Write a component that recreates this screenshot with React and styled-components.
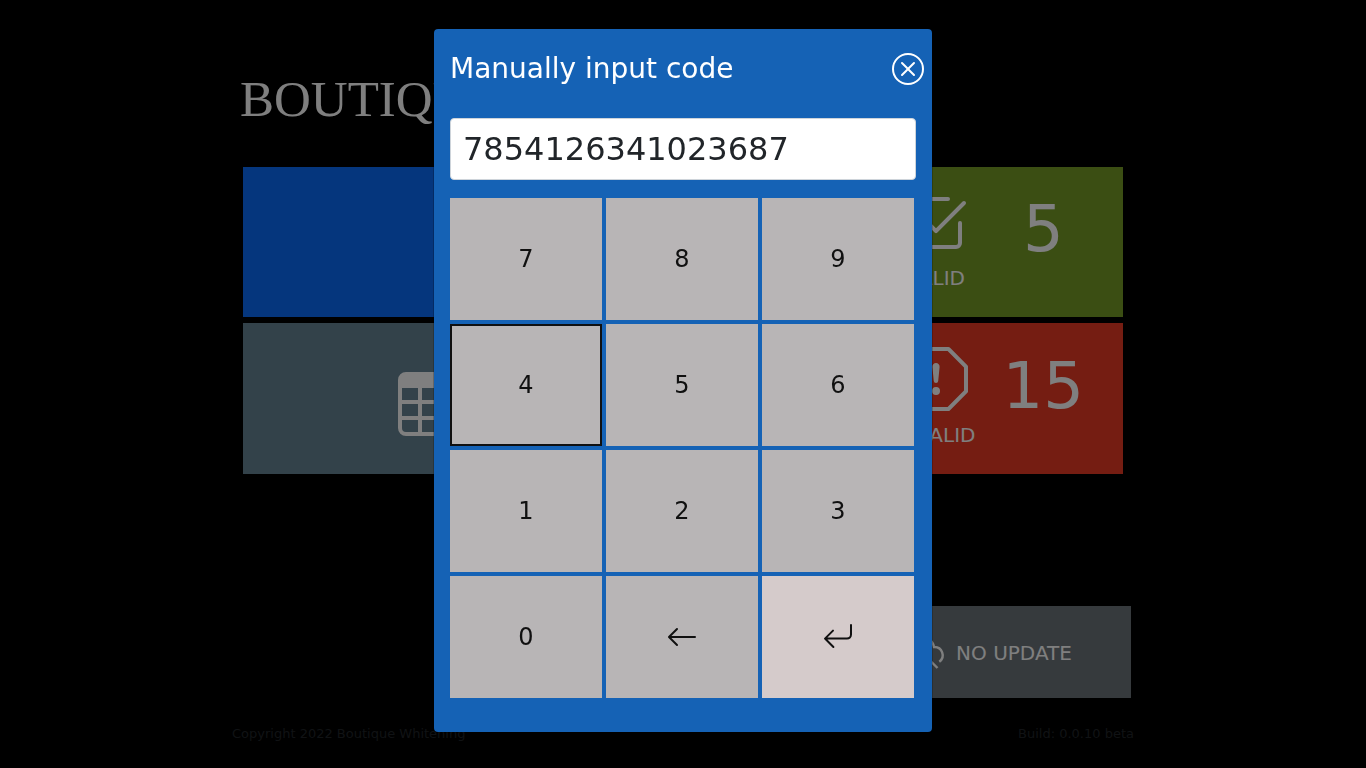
import React from "react";
import styled, { createGlobalStyle } from "styled-components";
import {
  BsTable,
  BsXCircle,
  BsArrowLeft,
  BsArrowReturnLeft,
  BsCheck2Square,
  BsExclamationOctagon,
} from "react-icons/bs";

const GlobalStyle = createGlobalStyle`
  *, *::before, *::after { box-sizing: border-box; }
  body {
    margin: 0;
    background: #000;
    color: #212529;
    font-family: "DejaVu Sans", sans-serif;
    font-size: 16px;
    line-height: 24px;
  }
  svg { display: block; flex: none; }
`;

const Page = styled.div`
  max-width: 902px;
  margin: 0 auto;
`;

const Logo = styled.h1`
  margin: 0;
  padding: 69px 8px 38px;
  color: #fff;
  font-family: "Liberation Serif", serif;
  font-size: 51px;
  font-weight: 400;
  line-height: 60px;
`;

const Tiles = styled.main`
  display: grid;
  grid-template-columns: 1fr 267px;
  grid-template-rows: minmax(150px, auto) minmax(151px, auto);
  gap: 6px;
  padding: 0 11px;
`;

const WideTile = styled.button`
  display: grid;
  grid-template-columns: 8fr 5fr;
  align-items: center;
  justify-items: center;
  padding: 10px 0 0;
  border: 0;
  color: #fff;
  background: ${(p) => p.$color};
`;

const CountTile = styled.section`
  display: grid;
  grid-template-columns: 1fr 1fr;
  padding: 24px 26px;
  color: #fff;
  background: ${(p) => p.$color};
`;

const Status = styled.div`
  display: flex;
  flex-direction: column;
  align-items: center;
  justify-content: space-between;
  gap: 8px;
  font-size: 20px;
  line-height: 30px;
`;

const Count = styled.div`
  align-self: end;
  padding-bottom: 26px;
  text-align: center;
  font-size: 64px;
  line-height: 76px;
`;

const Actions = styled.div`
  display: flex;
  justify-content: flex-end;
  padding: 132px 3px 24px;
`;

const UpdateButton = styled.button`
  display: flex;
  align-items: center;
  justify-content: center;
  gap: 12px;
  width: 278px;
  height: 92px;
  padding: 2px 0 0;
  border: 0;
  color: #fff;
  background: #6c757b;
  font: 20px/30px "DejaVu Sans", sans-serif;
`;

const Footer = styled.footer`
  display: flex;
  justify-content: space-between;
  font-size: 13px;
  line-height: 24px;
`;

const Backdrop = styled.div`
  position: fixed;
  inset: 0;
  display: flex;
  align-items: flex-start;
  justify-content: center;
  padding: 28px 0;
  overflow: auto;
  background: rgba(0, 0, 0, 0.5);
`;

const Modal = styled.div`
  width: 500px;
  max-width: 100%;
  border: 1px solid rgba(0, 0, 0, 0.2);
  border-radius: 5px;
  background: #1562b5;
  background-clip: padding-box;
`;

const ModalHeader = styled.header`
  display: flex;
  align-items: center;
  justify-content: space-between;
  padding: 24px 8px 17px 16px;
`;

const ModalTitle = styled.h2`
  margin: 0;
  color: #fff;
  font-size: 28px;
  font-weight: 400;
  line-height: 32px;
`;

const CloseButton = styled.button`
  padding: 0;
  border: 0;
  color: #fff;
  background: none;
`;

const ModalBody = styled.form`
  padding: 16px 16px 34px;
`;

const CodeInput = styled.input`
  display: block;
  width: 100%;
  height: 62px;
  margin-bottom: 18px;
  padding: 6px 12px;
  border: 1px solid #ced4da;
  border-radius: 4px;
  color: #212529;
  background: #fff;
  font: 32px/48px "DejaVu Sans", sans-serif;
`;

const Keypad = styled.div`
  display: grid;
  grid-template-columns: repeat(3, 1fr);
  grid-auto-rows: 122px;
  gap: 4px;
  padding-right: 2px;
`;

const Key = styled.button`
  display: flex;
  align-items: center;
  justify-content: center;
  padding: 0;
  border: ${(p) => (p.$active ? "2px solid #101010" : "0")};
  color: #101010;
  background: ${(p) => (p.$enter ? "#d5cbcb" : "#b8b5b6")};
  font: 24px/36px "DejaVu Sans", sans-serif;
`;

function CloudOffIcon() {
  return (
    <svg
      width="32"
      height="32"
      viewBox="0 0 32 32"
      fill="none"
      stroke="currentColor"
      strokeWidth="2.4"
      overflow="visible"
      aria-hidden="true"
    >
      <path d="M9 1.5A10.5 10.5 0 0 1 22 10A8.2 8.2 0 0 1 27.3 24.8" />
      <path d="M4 5A10 10 0 0 0 1.5 17A8 8 0 0 0 9.5 25H19" />
      <path d="M1.5 7L25.5 31" />
    </svg>
  );
}

const digits = ["7", "8", "9", "4", "5", "6", "1", "2", "3", "0"];

export default function App() {
  return (
    <>
      <GlobalStyle />
      <Page>
        <Logo>BOUTIQUE</Logo>
        <Tiles>
          <WideTile type="button" $color="#0a6cfa" aria-label="Scan" />
          <CountTile $color="#769c26">
            <Status>
              <BsCheck2Square size={64} />
              VALID
            </Status>
            <Count>5</Count>
          </CountTile>
          <WideTile type="button" $color="#668494" aria-label="Table">
            <BsTable size={64} />
          </WideTile>
          <CountTile $color="#ea3a24">
            <Status>
              <BsExclamationOctagon size={64} />
              INVALID
            </Status>
            <Count>15</Count>
          </CountTile>
        </Tiles>
        <Actions>
          <UpdateButton type="button">
            <CloudOffIcon />
            NO UPDATE
          </UpdateButton>
        </Actions>
        <Footer>
          <span>Copyright 2022 Boutique Whitening</span>
          <span>Build: 0.0.10 beta</span>
        </Footer>
      </Page>
      <Backdrop>
        <Modal role="dialog" aria-modal="true" aria-labelledby="code-title">
          <ModalHeader>
            <ModalTitle id="code-title">Manually input code</ModalTitle>
            <CloseButton type="button" aria-label="Close">
              <BsXCircle size={32} />
            </CloseButton>
          </ModalHeader>
          <ModalBody onSubmit={(e) => e.preventDefault()}>
            <CodeInput
              type="text"
              aria-labelledby="code-title"
              defaultValue="7854126341023687"
            />
            <Keypad>
              {digits.map((d) => (
                <Key key={d} type="button" $active={d === "4"}>
                  {d}
                </Key>
              ))}
              <Key type="button" aria-label="Backspace">
                <BsArrowLeft size={32} />
              </Key>
              <Key type="submit" aria-label="Enter" $enter>
                <BsArrowReturnLeft size={32} />
              </Key>
            </Keypad>
          </ModalBody>
        </Modal>
      </Backdrop>
    </>
  );
}
